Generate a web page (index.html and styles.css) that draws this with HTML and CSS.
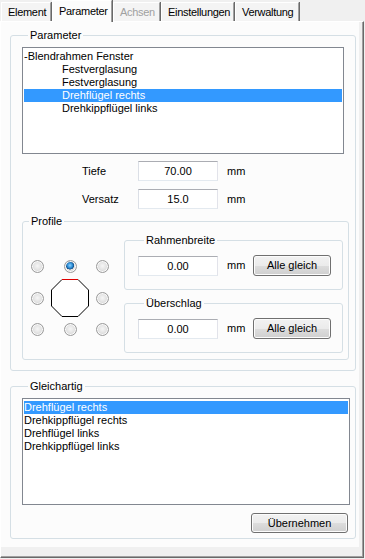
FILE: index.html
```html
<!DOCTYPE html>
<html lang="de">
<head>
<meta charset="utf-8">
<title>Parameter</title>
<link rel="stylesheet" href="styles.css">
</head>
<body>
<div class="window">
  <div class="tabs">
    <div class="tab t-element">Element</div>
    <div class="tab t-param active">Parameter</div>
    <div class="tab t-achsen disabled">Achsen</div>
    <div class="tab t-einst">Einstellungen</div>
    <div class="tab t-verw">Verwaltung</div>
  </div>
  <div class="tabctl">
    <div class="page">
      <fieldset class="group g-param">
        <legend>Parameter</legend>
        <div class="listbox lb-param">
          <div class="item">-Blendrahmen Fenster</div>
          <div class="item sub">Festverglasung</div>
          <div class="item sub">Festverglasung</div>
          <div class="item sub selected">Drehflügel rechts</div>
          <div class="item sub">Drehkippflügel links</div>
        </div>
        <div class="field-row first">
          <span class="lbl">Tiefe</span>
          <div class="input">70.00</div>
          <span class="unit">mm</span>
        </div>
        <div class="field-row">
          <span class="lbl">Versatz</span>
          <div class="input">15.0</div>
          <span class="unit">mm</span>
        </div>
        <fieldset class="group g-profile">
          <legend>Profile</legend>
          <div class="profile-body">
            <div class="radiogrid">
              <span class="radio"></span>
              <span class="radio checked"></span>
              <span class="radio"></span>
              <span class="radio"></span>
              <svg class="octagon" width="38" height="38" viewBox="0 0 38 38">
                <polygon points="11,0.5 27,0.5 37.5,11 37.5,27 27,37.5 11,37.5 0.5,27 0.5,11" fill="#fff" stroke="#000" stroke-width="1"/>
                <line x1="11" y1="0.5" x2="27" y2="0.5" stroke="#e00000" stroke-width="1"/>
              </svg>
              <span class="radio"></span>
              <span class="radio"></span>
              <span class="radio"></span>
              <span class="radio"></span>
            </div>
            <div class="subgroups">
              <fieldset class="group sub-group">
                <legend>Rahmenbreite</legend>
                <div class="sub-row">
                  <div class="input small">0.00</div>
                  <span class="unit">mm</span>
                  <button class="btn btn-alle" type="button">Alle gleich</button>
                </div>
              </fieldset>
              <fieldset class="group sub-group second">
                <legend>Überschlag</legend>
                <div class="sub-row">
                  <div class="input small">0.00</div>
                  <span class="unit">mm</span>
                  <button class="btn btn-alle" type="button">Alle gleich</button>
                </div>
              </fieldset>
            </div>
          </div>
        </fieldset>
      </fieldset>
      <fieldset class="group g-same">
        <legend>Gleichartig</legend>
        <div class="listbox lb-same">
          <div class="item selected">Drehflügel rechts</div>
          <div class="item">Drehkippflügel rechts</div>
          <div class="item">Drehflügel links</div>
          <div class="item">Drehkippflügel links</div>
        </div>
        <div class="btn-row">
          <button class="btn btn-apply" type="button">Übernehmen</button>
        </div>
      </fieldset>
    </div>
  </div>
</div>
</body>
</html>
```
FILE: styles.css
```css
* { box-sizing: border-box; }
html, body {
  margin: 0;
  padding: 0;
  background: #f0f0f0;
}
body {
  font-family: "Liberation Sans", Arial, sans-serif;
  font-size: 11px;
  line-height: 13px;
  color: #000;
  width: 365px;
  height: 559px;
  overflow: hidden;
}
.window {
  width: 365px;
  height: 559px;
  display: flex;
  flex-direction: column;
}

/* Tabs */
.tabs {
  height: 21px;
  display: flex;
  align-items: flex-end;
  padding-left: 1px;
}
.tab {
  height: 19px;
  padding: 3px 0 0 6px;
  background: #f4f4f4;
  border-top: 1px solid #fff;
  border-left: 1px solid #fff;
  border-right: 1px solid #a0a0a0;
  box-shadow: 1px 0 0 #696969;
  margin-right: 1px;
  white-space: nowrap;
  overflow: hidden;
  letter-spacing: -0.3px;
}
.tab.active {
  background: #fcfcfc;
  padding-top: 4px;
  position: relative;
  z-index: 1;
  margin-bottom: -1px;
  height: 22px;
}
.tab.disabled { color: #a0a0a0; }
.t-element { width: 50px; }
.t-param { width: 60px; }
.t-achsen { width: 47px; }
.t-einst { width: 73px; }
.t-verw { width: 64px; }

/* tab control frame */
.tabctl {
  width: 364px;
  height: 537px;
  border-top: 1px solid #fff;
  border-left: 1px solid #fff;
  border-right: 1px solid #696969;
  border-bottom: 1px solid #696969;
  box-shadow: inset -1px -1px 0 #a0a0a0;
  background: #f0f0f0;
  padding: 0 2px 10px 0;
}
.page {
  background: #fcfcfc;
  height: 100%;
  width: 358px;
  padding: 7px 0 0 9px;
}

/* group boxes */
.group {
  margin: 0;
  border: 1px solid #d5dfe5;
  border-radius: 3px;
  padding: 0;
  min-width: 0;
}
.group > legend {
  margin-left: 6px;
  padding: 0 2px;
  line-height: 13px;
}
.g-param {
  width: 346px;
  padding: 0 0 10px 11px;
}
.g-same {
  width: 346px;
  margin-top: 9px;
  padding: 0 5px 5px 11px;
}

/* list boxes */
.listbox {
  border: 1px solid #828790;
  background: #fff;
  padding: 2px 1px;
  height: 107px;
}
.lb-param { width: 322px; margin-top: 5px; }
.lb-same { width: 328px; margin-top: 5px; }
.item {
  height: 13px;
  line-height: 13px;
  white-space: nowrap;
}
.item.sub { padding-left: 38px; }
.item.selected {
  background: #3399ff;
  color: #fff;
}

/* text fields */
.field-row {
  display: flex;
  align-items: center;
  height: 20px;
  margin-top: 8px;
}
.field-row.first { margin-top: 7px; }
.lbl {
  margin-left: 60px;
  width: 56px;
}
.input {
  width: 80px;
  height: 20px;
  border: 1px solid;
  border-color: #abadb3 #e2e3ea #e3e9ef #dbdfe6;
  background: #fff;
  text-align: center;
  line-height: 18px;
}
.unit {
  margin-left: 9px;
  width: 26px;
}

/* profile */
.g-profile {
  width: 327px;
  margin-top: 6px;
  padding: 0 0 6px 0;
}
.profile-body {
  display: flex;
}
.radiogrid {
  display: grid;
  grid-template-columns: 13px 38px 13px;
  grid-template-rows: 13px 38px 13px;
  column-gap: 7px;
  row-gap: 6px;
  align-items: center;
  justify-items: center;
  margin: 32px 0 0 8px;
  height: 76px;
}
.octagon { display: block; }
.radio {
  width: 13px;
  height: 13px;
  border-radius: 50%;
  border: 1px solid #9a9a9a;
  background: radial-gradient(circle at 50% 45%, #f6f6f6 0%, #e4e4e4 45%, #cfcfcf 80%, #bdbdbd 100%);
  box-shadow: inset 0 0 0 1px #fafafa;
}
.radio.checked {
  background:
    radial-gradient(circle at 45% 40%, #8fd0ff 0%, #2d8fd6 28%, #144e86 44%, rgba(20,78,134,0) 48%),
    radial-gradient(circle at 50% 45%, #f6f6f6 0%, #e4e4e4 45%, #cfcfcf 80%, #bdbdbd 100%);
}
.subgroups {
  margin-left: 15px;
  display: flex;
  flex-direction: column;
}
.sub-group {
  width: 219px;
  margin-top: 6px;
  padding: 0 0 13px 13px;
}
.sub-group.second { margin-top: 7px; }
.sub-row {
  display: flex;
  align-items: center;
  height: 21px;
  margin-top: 8px;
}
.input.small { width: 80px; }

/* buttons */
.btn {
  font-family: "Liberation Sans", Arial, sans-serif;
  font-size: 11px;
  color: #000;
  border: 1px solid #707070;
  border-radius: 3px;
  background: linear-gradient(#f2f2f2 0%, #ebebeb 50%, #dddddd 51%, #cfcfcf 100%);
  box-shadow: inset 0 0 0 1px #fcfcfc;
  padding: 0;
  margin: 0;
  line-height: 13px;
}
.btn-alle {
  width: 78px;
  height: 21px;
}
.btn-row {
  display: flex;
  justify-content: flex-end;
  margin-top: 8px;
  padding-right: 2px;
}
.btn-apply {
  width: 97px;
  height: 20px;
}
```
